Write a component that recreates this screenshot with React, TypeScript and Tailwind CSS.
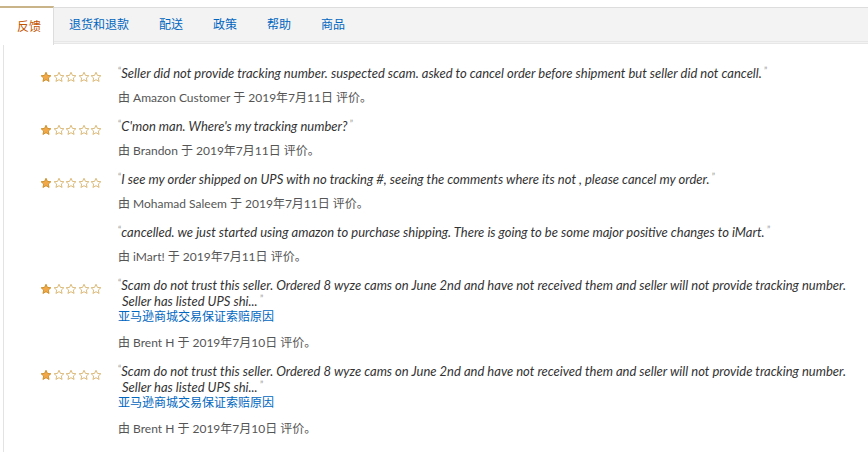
import React from 'react'

const tabs = ['反馈', '退货和退款', '配送', '政策', '帮助', '商品']

type Review = {
  stars: boolean
  lines: string[]
  author: string
  date: string
  link?: boolean
  gap?: string
}

const reviews: Review[] = [
  {
    stars: true,
    lines: [
      'Seller did not provide tracking number. suspected scam. asked to cancel order before shipment but seller did not cancell.',
    ],
    author: 'Amazon Customer',
    date: '2019年7月11日',
  },
  {
    stars: true,
    lines: ["C'mon man. Where's my tracking number?"],
    author: 'Brandon',
    date: '2019年7月11日',
  },
  {
    stars: true,
    lines: [
      'I see my order shipped on UPS with no tracking #, seeing the comments where its not , please cancel my order.',
    ],
    author: 'Mohamad Saleem',
    date: '2019年7月11日',
  },
  {
    stars: false,
    lines: [
      'cancelled. we just started using amazon to purchase shipping. There is going to be some major positive changes to iMart.',
    ],
    author: 'iMart!',
    date: '2019年7月11日',
    gap: 'mt-[4px]',
  },
  {
    stars: true,
    lines: [
      'Scam do not trust this seller. Ordered 8 wyze cams on June 2nd and have not received them and seller will not provide tracking number.',
      'Seller has listed UPS shi...',
    ],
    author: 'Brent H',
    date: '2019年7月10日',
    link: true,
    gap: 'mt-[1px]',
  },
  {
    stars: true,
    lines: [
      'Scam do not trust this seller. Ordered 8 wyze cams on June 2nd and have not received them and seller will not provide tracking number.',
      'Seller has listed UPS shi...',
    ],
    author: 'Brent H',
    date: '2019年7月10日',
    link: true,
  },
]

function Star({ filled }: { filled: boolean }) {
  return (
    <svg width="12" height="12" viewBox="0 0 24 24" className="block">
      <path
        d="M12 2.5l2.9 6.3 6.8.7-5.1 4.6 1.5 6.8L12 17.4l-6.1 3.5 1.5-6.8L2.3 9.5l6.8-.7z"
        fill={filled ? '#f3a847' : '#fff'}
        stroke={filled ? '#c88a1f' : '#d8b26a'}
        strokeWidth="1.8"
        strokeLinejoin="round"
      />
    </svg>
  )
}

function Stars() {
  return (
    <div className="flex gap-[0.5px] pt-[5px]">
      <Star filled />
      <Star filled={false} />
      <Star filled={false} />
      <Star filled={false} />
      <Star filled={false} />
    </div>
  )
}

function Quote({ children }: { children: string }) {
  return <span className="relative -top-[4px] text-[9px] not-italic text-[#999]">{children}</span>
}

export default function App() {
  return (
    <div
      className="w-[868px] h-[452px] bg-white overflow-hidden"
      style={{ fontFamily: 'Lato, "Noto Sans CJK SC", sans-serif' }}
    >
      {/* Tabs */}
      <div className="mt-[7px] flex h-[37px] border-t border-b-[3px] border-t-[#dddddd] border-b-[#e7e7e7] bg-[#f3f3f3] border-double">
        {tabs.map((t, i) => (
          <div
            key={t}
            className={
              i === 0
                ? '-mt-[2px] flex h-[39px] items-center border-t-2 border-r border-t-[#c9b48a] border-r-[#dddddd] bg-white pl-[17px] pr-[12px] text-[12px] text-[#c45500]'
                : 'flex items-center px-[15px] text-[12px] text-[#0066c0]'
            }
          >
            {t}
          </div>
        ))}
      </div>

      {/* Feedback list */}
      <div className="ml-[3px] h-full border-l border-[#e3e3e3] pl-[36px] pt-[22px]">
        {reviews.map((r, i) => (
          <div key={i} className={`flex mb-[14px] ${r.gap ?? ''}`}>
            <div className="w-[78px] shrink-0">{r.stars && <Stars />}</div>
            <div>
              <div className="text-[13px] italic leading-[15px] text-[#333]">
                {r.lines.map((l, j) => (
                  <div key={j} className={j === 0 ? '' : 'pl-[4px]'}>
                    {j === 0 && <Quote>“</Quote>}
                    {l}
                    {j === r.lines.length - 1 && <Quote> ”</Quote>}
                  </div>
                ))}
              </div>
              {r.link && (
                <div className="text-[12px] leading-[14px] text-[#0066c0]">亚马逊商城交易保证索赔原因</div>
              )}
              <div className={`${r.link ? 'mt-[11px]' : 'mt-[8px]'} text-[12px] leading-[15px] text-[#555]`}>
                由 {r.author} 于 {r.date} 评价。
              </div>
            </div>
          </div>
        ))}
      </div>
    </div>
  )
}
